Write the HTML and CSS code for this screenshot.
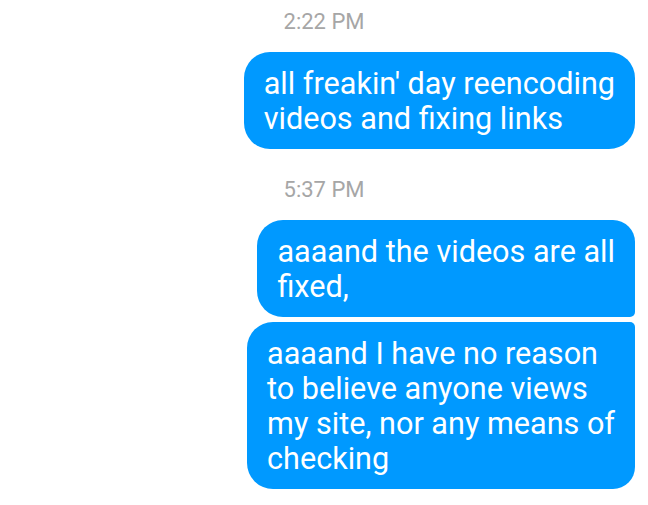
FILE: index.html
```html
<!DOCTYPE html>
<html>
<head>
<meta charset="utf-8">
<link rel="stylesheet" href="styles.css">
</head>
<body>
<div class="thread">
  <section class="group">
    <div class="ts">2:22 PM</div>
    <div class="msgs">
      <div class="bubble solo">all freakin' day reencoding<br>videos and fixing links</div>
    </div>
  </section>
  <section class="group">
    <div class="ts">5:37 PM</div>
    <div class="msgs">
      <div class="bubble first">aaaand the videos are all<br>fixed,</div>
      <div class="bubble last">aaaand I have no reason<br>to believe anyone views<br>my site, nor any means of<br>checking</div>
    </div>
  </section>
</div>
</body>
</html>
```
FILE: styles.css
```css
html, body {
  margin: 0;
  padding: 0;
  background: #ffffff;
}
body {
  font-family: Roboto, "Noto Sans", sans-serif;
  width: 648px;
  height: 505px;
  overflow: hidden;
}
.thread {
  padding: 9px 13px 0 0;
  display: flex;
  flex-direction: column;
}
.group + .group {
  margin-top: 28px;
}
.ts {
  text-align: center;
  font-size: 22px;
  line-height: 26px;
  color: #a6a6a6;
  padding-left: 13px;
  margin-bottom: 17px;
}
.msgs {
  display: flex;
  flex-direction: column;
  align-items: flex-end;
  gap: 5px;
}
.bubble {
  background: #0099ff;
  color: #ffffff;
  font-size: 30.6px;
  line-height: 35px;
  padding: 14px 20px 13px;
  white-space: nowrap;
  width: max-content;
  border-radius: 26px;
}
.bubble.first {
  border-radius: 26px 22px 5px 26px;
}
.bubble.last {
  border-radius: 26px 5px 22px 26px;
}
```
